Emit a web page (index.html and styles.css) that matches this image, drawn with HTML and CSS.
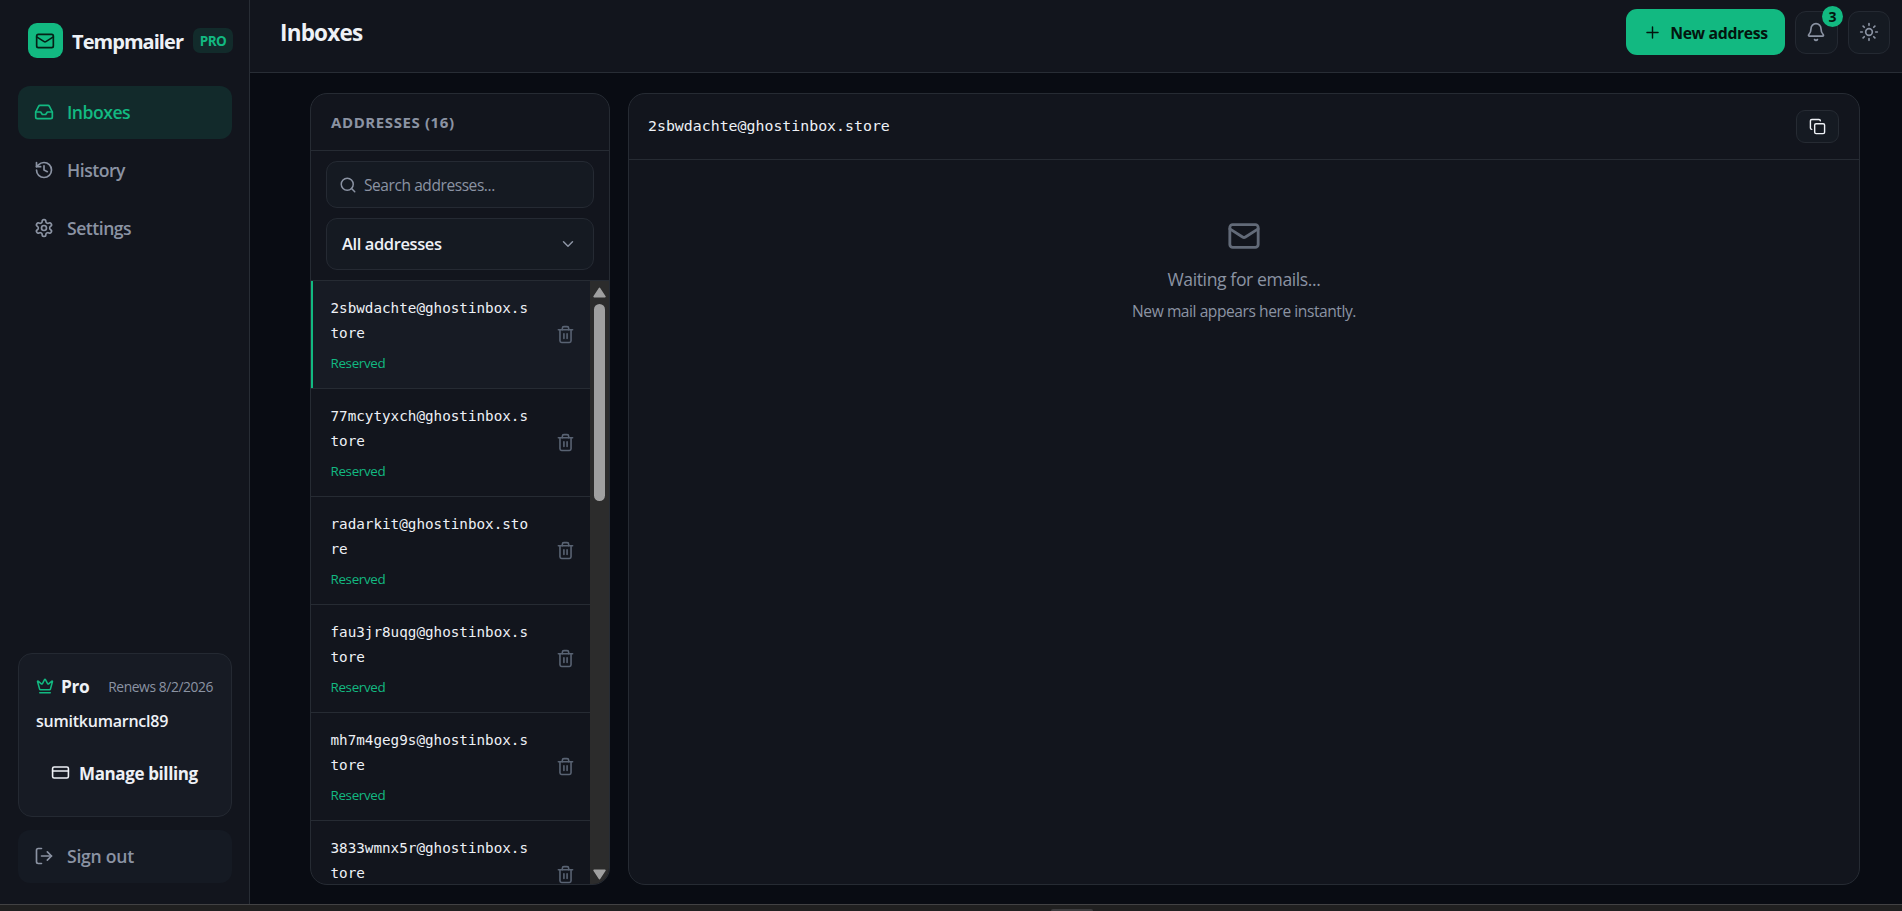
FILE: index.html
```html
<!DOCTYPE html>
<html lang="en">
<head>
<meta charset="utf-8">
<title>Inboxes - Tempmailer</title>
<link rel="stylesheet" href="styles.css">
</head>
<body>
<svg class="defs" aria-hidden="true">
  <symbol id="mail" viewBox="0 0 24 24"><rect x="2" y="4" width="20" height="16" rx="2"/><path d="m22 7-8.97 5.7a1.94 1.94 0 0 1-2.06 0L2 7"/></symbol>
  <symbol id="inbox" viewBox="0 0 24 24"><path d="M22 12h-6l-2 3h-4l-2-3H2"/><path d="M5.45 5.11 2 12v6a2 2 0 0 0 2 2h16a2 2 0 0 0 2-2v-6l-3.45-6.89A2 2 0 0 0 16.76 4H7.24a2 2 0 0 0-1.79 1.11z"/></symbol>
  <symbol id="history" viewBox="0 0 24 24"><path d="M3 12a9 9 0 1 0 9-9 9.75 9.75 0 0 0-6.74 2.74L3 8"/><path d="M3 3v5h5"/><path d="M12 7v5l4 2"/></symbol>
  <symbol id="gear" viewBox="0 0 24 24"><path d="M12.22 2h-.44a2 2 0 0 0-2 2v.18a2 2 0 0 1-1 1.73l-.43.25a2 2 0 0 1-2 0l-.15-.08a2 2 0 0 0-2.73.73l-.22.38a2 2 0 0 0 .73 2.73l.15.1a2 2 0 0 1 1 1.72v.51a2 2 0 0 1-1 1.74l-.15.09a2 2 0 0 0-.73 2.73l.22.38a2 2 0 0 0 2.73.73l.15-.08a2 2 0 0 1 2 0l.43.25a2 2 0 0 1 1 1.73V20a2 2 0 0 0 2 2h.44a2 2 0 0 0 2-2v-.18a2 2 0 0 1 1-1.73l.43-.25a2 2 0 0 1 2 0l.15.08a2 2 0 0 0 2.73-.73l.22-.39a2 2 0 0 0-.73-2.73l-.15-.08a2 2 0 0 1-1-1.74v-.5a2 2 0 0 1 1-1.74l.15-.09a2 2 0 0 0 .73-2.73l-.22-.38a2 2 0 0 0-2.73-.73l-.15.08a2 2 0 0 1-2 0l-.43-.25a2 2 0 0 1-1-1.73V4a2 2 0 0 0-2-2z"/><circle cx="12" cy="12" r="3"/></symbol>
  <symbol id="crown" viewBox="0 0 24 24"><path d="M11.562 3.266a.5.5 0 0 1 .876 0L15.39 8.87a1 1 0 0 0 1.516.294L21.183 5.5a.5.5 0 0 1 .798.519l-2.834 10.246a1 1 0 0 1-.956.734H5.81a1 1 0 0 1-.957-.734L2.02 6.02a.5.5 0 0 1 .798-.519l4.276 3.664a1 1 0 0 0 1.516-.294z"/><path d="M5 21h14"/></symbol>
  <symbol id="card" viewBox="0 0 24 24"><rect x="2" y="5" width="20" height="14" rx="2"/><path d="M2 10h20"/></symbol>
  <symbol id="logout" viewBox="0 0 24 24"><path d="M9 21H5a2 2 0 0 1-2-2V5a2 2 0 0 1 2-2h4"/><path d="m16 17 5-5-5-5"/><path d="M21 12H9"/></symbol>
  <symbol id="plus" viewBox="0 0 24 24"><path d="M5 12h14M12 5v14"/></symbol>
  <symbol id="bell" viewBox="0 0 24 24"><path d="M10.268 21a2 2 0 0 0 3.464 0"/><path d="M3.262 15.326A1 1 0 0 0 4 17h16a1 1 0 0 0 .74-1.673C19.41 13.956 18 12.499 18 8A6 6 0 0 0 6 8c0 4.499-1.411 5.956-2.738 7.326"/></symbol>
  <symbol id="sun" viewBox="0 0 24 24"><circle cx="12" cy="12" r="4"/><path d="M12 2v2M12 20v2M4.93 4.93l1.41 1.41M17.66 17.66l1.41 1.41M2 12h2M20 12h2M6.34 17.66l-1.41 1.41M19.07 4.93l-1.41 1.41"/></symbol>
  <symbol id="copy" viewBox="0 0 24 24"><rect x="8" y="8" width="14" height="14" rx="2"/><path d="M4 16c-1.1 0-2-.9-2-2V4c0-1.1.9-2 2-2h10c1.1 0 2 .9 2 2"/></symbol>
  <symbol id="search" viewBox="0 0 24 24"><circle cx="11" cy="11" r="8"/><path d="m21 21-4.3-4.3"/></symbol>
  <symbol id="chevron" viewBox="0 0 24 24"><path d="m6 9 6 6 6-6"/></symbol>
  <symbol id="trash" viewBox="0 0 24 24"><path d="M3 6h18"/><path d="M19 6v14a2 2 0 0 1-2 2H7a2 2 0 0 1-2-2V6"/><path d="M8 6V4a2 2 0 0 1 2-2h4a2 2 0 0 1 2 2v2"/><path d="M10 11v6M14 11v6"/></symbol>
</svg>
<div class="window">
  <div class="app">
    <aside class="sidebar">
      <div class="brand">
        <span class="logo"><svg class="icon"><use href="#mail"/></svg></span>
        <span class="brand-name">Tempmailer</span>
        <span class="pro-tag">PRO</span>
      </div>
      <nav class="nav">
        <a class="nav-item active"><svg class="icon"><use href="#inbox"/></svg><span>Inboxes</span></a>
        <a class="nav-item"><svg class="icon"><use href="#history"/></svg><span>History</span></a>
        <a class="nav-item"><svg class="icon"><use href="#gear"/></svg><span>Settings</span></a>
      </nav>
      <section class="plan">
        <div class="plan-row"><svg class="icon"><use href="#crown"/></svg><span class="plan-name">Pro</span><span class="renews">Renews 8/2/2026</span></div>
        <div class="user">sumitkumarncl89</div>
        <a class="billing"><svg class="icon"><use href="#card"/></svg><span>Manage billing</span></a>
      </section>
      <a class="nav-item sign-out"><svg class="icon"><use href="#logout"/></svg><span>Sign out</span></a>
    </aside>
    <div class="main">
      <header class="topbar">
        <h1 class="title">Inboxes</h1>
        <div class="actions">
          <button class="new-btn"><svg class="icon"><use href="#plus"/></svg><span>New address</span></button>
          <button class="icon-btn bell"><svg class="icon"><use href="#bell"/></svg><span class="badge">3</span></button>
          <button class="icon-btn sun"><svg class="icon"><use href="#sun"/></svg></button>
        </div>
      </header>
      <div class="content">
        <section class="panel addresses">
          <div class="addresses-head">ADDRESSES (16)</div>
          <div class="filters">
            <div class="search"><svg class="icon"><use href="#search"/></svg><span>Search addresses...</span></div>
            <div class="select"><span>All addresses</span><svg class="icon"><use href="#chevron"/></svg></div>
          </div>
          <div class="list-wrap">
            <div class="list">
              <div class="item selected"><div class="item-text"><div class="addr">2sbwdachte@ghostinbox.store</div><div class="state">Reserved</div></div><svg class="icon"><use href="#trash"/></svg></div>
              <div class="item"><div class="item-text"><div class="addr">77mcytyxch@ghostinbox.store</div><div class="state">Reserved</div></div><svg class="icon"><use href="#trash"/></svg></div>
              <div class="item"><div class="item-text"><div class="addr">radarkit@ghostinbox.store</div><div class="state">Reserved</div></div><svg class="icon"><use href="#trash"/></svg></div>
              <div class="item"><div class="item-text"><div class="addr">fau3jr8uqg@ghostinbox.store</div><div class="state">Reserved</div></div><svg class="icon"><use href="#trash"/></svg></div>
              <div class="item"><div class="item-text"><div class="addr">mh7m4geg9s@ghostinbox.store</div><div class="state">Reserved</div></div><svg class="icon"><use href="#trash"/></svg></div>
              <div class="item"><div class="item-text"><div class="addr">3833wmnx5r@ghostinbox.store</div></div><svg class="icon"><use href="#trash"/></svg></div>
            </div>
            <div class="scrollbar">
              <svg class="arrow" viewBox="0 0 12 10"><path d="M6 1.2 11 8.8H1z"/></svg>
              <div class="thumb"></div>
              <svg class="arrow" viewBox="0 0 12 10"><path d="M6 8.8 11 1.2H1z"/></svg>
            </div>
          </div>
        </section>
        <section class="panel viewer">
          <div class="viewer-head"><span class="current">2sbwdachte@ghostinbox.store</span><button class="copy-btn"><svg class="icon"><use href="#copy"/></svg></button></div>
          <div class="empty">
            <svg class="icon"><use href="#mail"/></svg>
            <div class="empty-title">Waiting for emails...</div>
            <div class="empty-note">New mail appears here instantly.</div>
          </div>
        </section>
      </div>
    </div>
  </div>
  <div class="taskbar"><div class="handle"></div></div>
</div>
</body>
</html>
```

FILE: styles.css
```css
* { box-sizing: border-box; }
body { margin: 0; background: #090c13; color: #eef1f6; font-family: "Open Sans", "Noto Sans", sans-serif; }
button { font: inherit; color: inherit; padding: 0; }
.defs { display: none; }
.icon { width: 20px; height: 20px; flex: none; fill: none; stroke: currentColor; stroke-width: 2; stroke-linecap: round; stroke-linejoin: round; }
.window { width: 1902px; height: 911px; display: flex; flex-direction: column; overflow: hidden; }
.app { flex: 1; display: flex; min-height: 0; }
.taskbar { height: 7px; background: #202020; border-top: 1px solid #424244; display: flex; align-items: flex-end; padding-left: 1051px; }
.handle { width: 42px; height: 2px; background: #3c3c3e; border-radius: 2px 2px 0 0; }

.sidebar { width: 250px; flex: none; background: #12151d; border-right: 1px solid #282d35; padding: 23px 17px 21px 18px; display: flex; flex-direction: column; }
.brand { display: flex; align-items: center; height: 35px; padding-left: 10px; margin-bottom: 28px; }
.logo { width: 35px; height: 35px; border-radius: 9px; background: #12b981; color: #052016; display: grid; place-items: center; flex: none; }
.logo .icon { width: 20px; height: 20px; margin: 0 1px 0 0; }
.brand-name { margin-left: 9px; font-size: 20px; line-height: 35px; padding-top: 2px; font-weight: 700; letter-spacing: -0.95px; width: 112px; white-space: nowrap; }
.pro-tag { margin-left: 10px; width: 40px; height: 25px; border-radius: 7px; background: #122b2b; color: #12b981; font-size: 13.5px; font-weight: 700; letter-spacing: -0.6px; display: grid; place-items: center; flex: none; }
.nav { display: flex; flex-direction: column; gap: 5px; flex: 1; }
.nav-item { height: 53px; display: flex; align-items: center; gap: 13px; padding: 0 0 1px 16px; border-radius: 12px; color: #8b93a3; font-size: 17.6px; font-weight: 600; letter-spacing: -0.5px; }
.nav-item.active { background: #122a2b; color: #12b981; }
.nav-item .icon { margin-top: -1px; }
.plan { height: 164px; margin-bottom: 13px; border: 1px solid #242932; border-radius: 14px; background: #171b24; padding: 19px 18px 0 17px; }
.plan-row { display: flex; align-items: center; height: 26px; }
.plan-row .icon { width: 18px; height: 18px; color: #12b981; }
.plan-name { margin-left: 7px; font-size: 17.3px; font-weight: 700; letter-spacing: -0.4px; }
.renews { margin-left: auto; font-size: 13.8px; letter-spacing: -0.4px; color: #8b93a3; white-space: nowrap; }
.user { height: 26px; line-height: 26px; margin: 9px 0 0; font-size: 16px; font-weight: 600; letter-spacing: -0.24px; }
.billing { display: flex; align-items: center; gap: 9px; margin-top: 26px; padding-left: 15px; height: 26px; font-size: 17px; font-weight: 700; letter-spacing: -0.38px; white-space: nowrap; }
.billing .icon { width: 19px; height: 19px; margin-top: -1px; }
.sign-out { background: #151a23; flex: none; letter-spacing: -0.25px; }

.main { flex: 1; display: flex; flex-direction: column; min-width: 0; }
.topbar { height: 73px; flex: none; background: #12151d; border-bottom: 1px solid #282d35; display: flex; justify-content: space-between; padding: 0 12px 0 30px; }
.title { margin: 0; font-size: 22.5px; line-height: 66px; font-weight: 700; letter-spacing: -0.8px; }
.actions { display: flex; align-items: center; gap: 10px; height: 64px; }
.new-btn { width: 159px; height: 46px; border: 0; border-radius: 11px; background: #12b981; color: #03150e; font-size: 15.8px; font-weight: 700; letter-spacing: -0.35px; display: flex; align-items: center; justify-content: center; gap: 8px; white-space: nowrap; }
.new-btn span { padding-top: 2px; }
.new-btn .icon { width: 19px; height: 19px; stroke-width: 1.8; }
.icon-btn { position: relative; width: 43px; height: 43px; margin-top: 1px; border: 1px solid #242932; border-radius: 11px; background: #151a22; color: #8b93a3; display: grid; place-items: center; }
.icon-btn .icon { width: 20px; height: 20px; margin: -1px 1px 0 0; }
.icon-btn.sun { width: 42px; }
.badge { position: absolute; top: -6px; right: -6px; width: 21px; height: 21px; border-radius: 50%; background: #12b981; color: #03150e; font-size: 14px; font-weight: 700; display: grid; place-items: center; }

.content { flex: 1; min-height: 0; display: flex; gap: 18px; padding: 20px 42px 19px 60px; }
.panel { background: #12151d; border: 1px solid #262b33; border-radius: 17px; overflow: hidden; display: flex; flex-direction: column; }
.addresses { width: 300px; flex: none; }
.addresses-head { height: 57px; flex: none; line-height: 56px; border-bottom: 1px solid #262b33; padding-left: 20px; color: #8b93a3; font-size: 15px; font-weight: 700; letter-spacing: 0.6px; }
.filters { flex: none; height: 130px; border-bottom: 1px solid #262b33; padding: 10px 15px 0; display: flex; flex-direction: column; gap: 10px; }
.search, .select { border: 1px solid #252a33; border-radius: 11px; background: #151a22; display: flex; align-items: center; }
.search { height: 47px; padding-left: 12px; gap: 7px; color: #8b93a3; font-size: 15.5px; letter-spacing: -0.42px; }
.search .icon { width: 18px; height: 18px; }
.select { height: 52px; justify-content: space-between; padding: 0 16px 1px 15px; font-size: 16.5px; font-weight: 600; letter-spacing: -0.4px; }
.select .icon { width: 18px; height: 18px; color: #8b93a3; }
.list-wrap { flex: 1; min-height: 0; display: flex; }
.list { flex: 1; min-width: 0; overflow: hidden; }
.item { height: 108px; border-bottom: 1px solid #262b33; display: flex; align-items: center; justify-content: space-between; padding: 0 15px 0 19.5px; color: #596373; }
.item.selected { background: #171b24; box-shadow: inset 2px 0 #12b981; }
.item .icon { width: 19px; height: 19px; }
.item-text { width: 204px; height: 78px; }
.addr { color: #eef1f6; font: 14.28px/25px "DejaVu Sans Mono", monospace; word-break: break-all; }
.state { margin-top: 5px; line-height: 24px; font-size: 13.4px; letter-spacing: -0.33px; color: #12b981; }
.scrollbar { width: 19px; flex: none; background: #2c2c2c; display: flex; flex-direction: column; align-items: center; padding: 6px 1px 4px 0; }
.arrow { width: 13px; height: 11px; fill: #a0a0a0; stroke: #a0a0a0; stroke-width: 1.5; stroke-linejoin: round; }
.thumb { width: 11px; height: 197px; margin: 6px 0 auto; border-radius: 6px; background: #a0a0a0; }

.viewer { flex: 1; min-width: 0; }
.viewer-head { height: 66px; flex: none; border-bottom: 1px solid #262b33; display: flex; align-items: center; justify-content: space-between; padding: 0 20px 0 19px; }
.current { font: 14.88px "DejaVu Sans Mono", monospace; padding-bottom: 1px; }
.copy-btn { width: 43px; height: 33px; border: 1px solid #262b33; border-radius: 9px; background: #151a22; display: grid; place-items: center; }
.copy-btn .icon { width: 17px; height: 17px; margin: -1px 1px 0 0; }
.empty { display: flex; flex-direction: column; align-items: center; padding-top: 59px; color: #8b93a3; }
.empty .icon { width: 34px; height: 34px; color: #626a78; }
.empty-title { margin-top: 10px; line-height: 32px; font-size: 17.6px; letter-spacing: -0.4px; }
.empty-note { line-height: 32px; font-size: 15.6px; letter-spacing: -0.45px; }
```
